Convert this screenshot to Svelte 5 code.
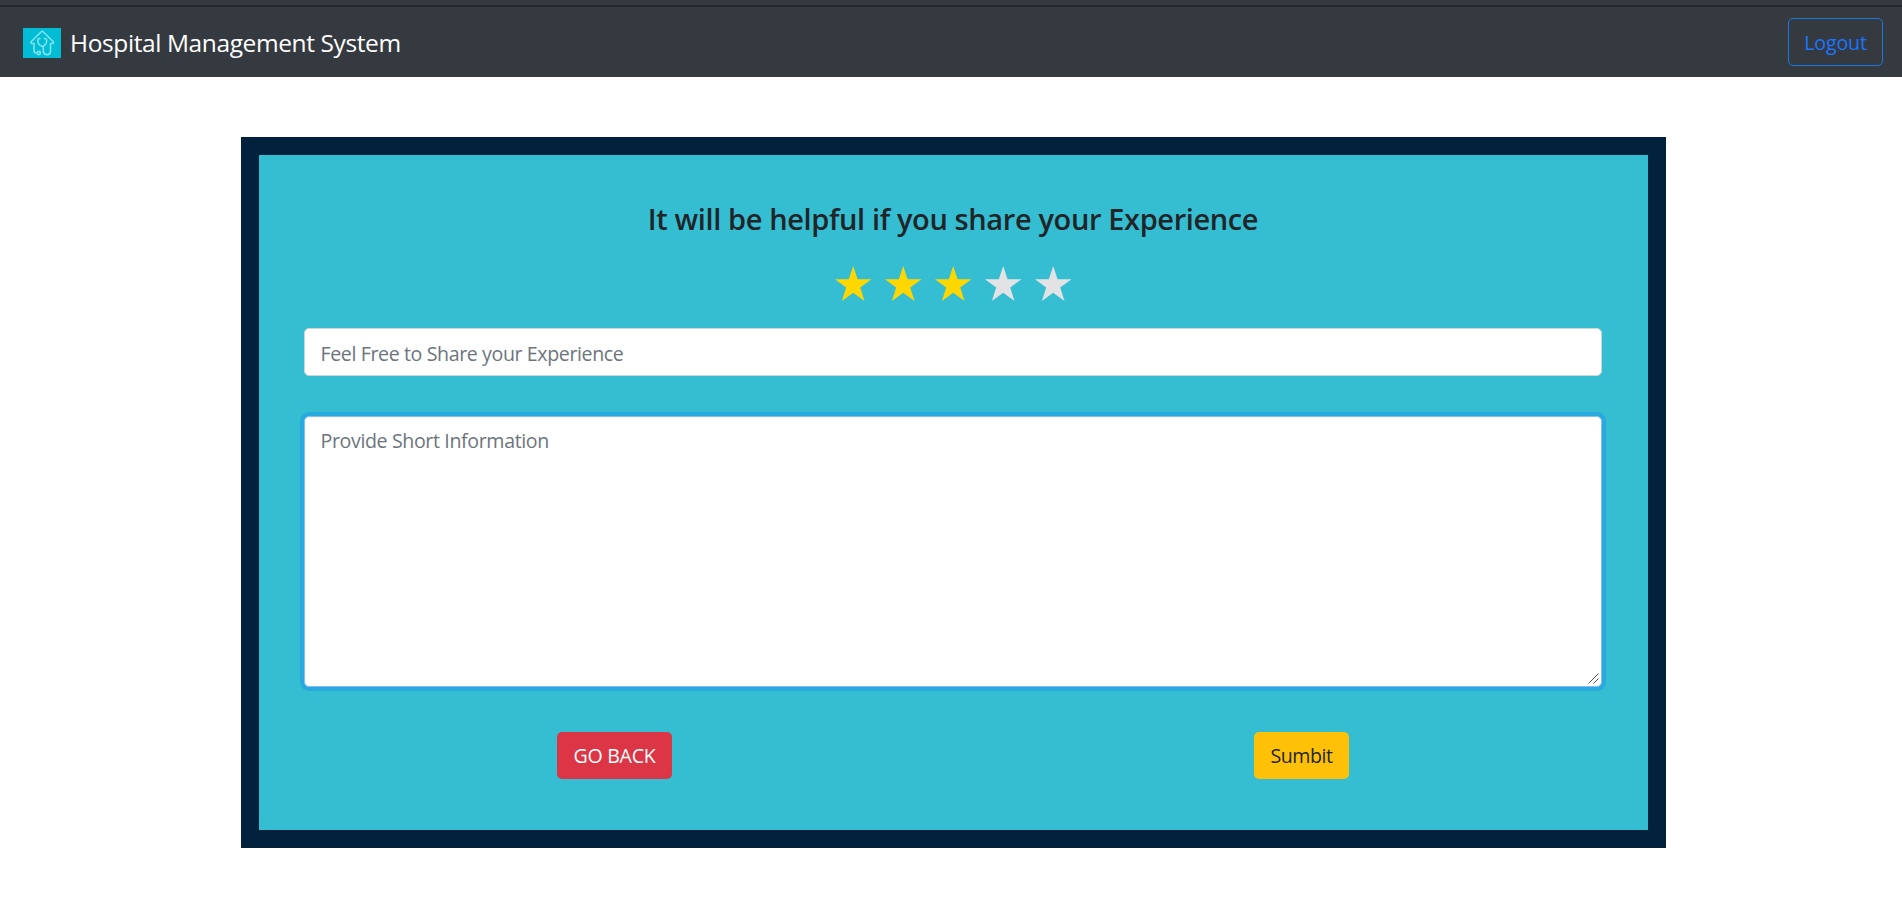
<script>
  let rating = $state(3);
  let title = $state('');
  let details = $state('');
</script>

<nav class="navbar">
  <a class="brand" href="#home">
    <svg class="logo" viewBox="0 0 38 30" aria-hidden="true">
      <rect width="38" height="30" fill="#00bcd4" />
      <g fill="none" stroke="#80e4ee" stroke-width="1.6" stroke-linecap="round" stroke-linejoin="round">
        <path d="M11 15.5H8.5Q7.3 14.7 8.4 13.5L18 4Q19.2 2.9 20.4 4L30 13.5Q31.1 14.7 29.8 15.5H27.5V23.5Q27.3 26.7 24 26.7Q20.8 26.5 20.3 23.5V18.5" />
        <path d="M11 15.5V22.5Q11 25 13.2 25H14" />
        <circle cx="15.8" cy="25" r="1.6" />
        <path d="M17 10.5Q14.7 10.3 14.8 13Q15.2 17.3 19.2 18.5Q23.3 17.3 23.7 13Q23.8 10.3 21.5 10.5" />
      </g>
    </svg>
    <span class="name">Hospital Management System</span>
  </a>
  <button class="btn outline" type="button">Logout</button>
</nav>

<main class="card">
  <h3>It will be helpful if you share your Experience</h3>
  <div class="stars">
    {#each [1, 2, 3, 4, 5] as n}
      <button type="button" class="star" class:on={n <= rating} aria-label="{n} stars" onclick={() => (rating = n)}>
        <svg viewBox="0.3 0 37 35"><path d="M18.5 0L22.85 13.3H36.8L25.5 21.5L29.8 35L18.5 26.8L7.2 35L11.5 21.5L.2 13.3H14.15Z" /></svg>
      </button>
    {/each}
  </div>
  <input class="field" type="text" placeholder="Feel Free to Share your Experience" bind:value={title} />
  <div class="area-wrap">
    <textarea class="field area" placeholder="Provide Short Information" bind:value={details}></textarea>
    <svg class="grip" viewBox="0 0 11 11" aria-hidden="true"><path d="M.5 10.5L10.5 .5M5.5 10.5L10.5 5.5" /></svg>
  </div>
  <div class="actions">
    <div><button class="btn danger" type="button">GO BACK</button></div>
    <div><button class="btn warning" type="button">Sumbit</button></div>
  </div>
</main>

<style>
  :global(body) {
    margin: 0;
    background: #fff;
    color: #212529;
    font-family: 'Open Sans', 'Noto Sans', sans-serif;
    font-size: 19.6px;
  }
  * {
    box-sizing: border-box;
  }
  .navbar {
    display: flex;
    align-items: center;
    justify-content: space-between;
    height: 77px;
    padding: 7px 19px 0 23px;
    background: linear-gradient(#343a40 5px, #24282d 5px, #24282d 7px, #343a40 7px);
  }
  .brand {
    display: flex;
    align-items: center;
    gap: 9px;
    margin-top: 2px;
    color: #fff;
    text-decoration: none;
  }
  .logo {
    display: block;
    width: 38px;
    height: 30px;
  }
  .name {
    font-size: 24.5px;
    letter-spacing: -0.396px;
    line-height: 30px;
    white-space: nowrap;
  }
  .btn {
    display: inline-block;
    height: 47px;
    padding: 0;
    border: 1px solid transparent;
    border-radius: 5px;
    font: inherit;
    line-height: 30px;
    text-align: center;
  }
  .outline {
    width: 95px;
    height: 48px;
    padding-top: 2px;
    border-color: #1a78dc;
    background: transparent;
    color: #1a75ff;
    letter-spacing: -0.17px;
  }
  .card {
    display: flex;
    flex-direction: column;
    width: 1425px;
    height: 711px;
    margin: 60px 0 0 241px;
    padding: 44px 46px 0 45px;
    border: 18px solid #02213d;
    background: #35bed1;
  }
  h3 {
    margin: 0;
    font-size: 29px;
    font-weight: 550;
    letter-spacing: -0.38px;
    line-height: 40px;
    text-align: center;
    white-space: nowrap;
  }
  .stars {
    display: flex;
    justify-content: center;
    gap: 13px;
    height: 35px;
    margin: 27px 0 27px 1px;
  }
  .star {
    width: 37px;
    height: 35px;
    padding: 0;
    border: 0;
    background: none;
    color: #e3e3e6;
  }
  .star.on {
    color: #ffd700;
  }
  .star svg {
    display: block;
    width: 37px;
    height: 35px;
    fill: currentColor;
  }
  .field {
    display: block;
    width: 1298px;
    height: 48px;
    margin: 0;
    padding: 8px 15.5px 6px;
    border: 1px solid #ced4da;
    border-radius: 5px;
    outline: 0;
    background: #fff;
    color: #495057;
    font: inherit;
    letter-spacing: -0.39px;
    line-height: 30px;
  }
  .field::placeholder {
    color: #6c757d;
    opacity: 1;
  }
  .area-wrap {
    position: relative;
    margin-top: 40px;
  }
  .area {
    height: 271px;
    padding-top: 9px;
    border-color: #80bdff;
    box-shadow: 0 0 0 4px #2aa9dd;
    letter-spacing: -0.37px;
    resize: none;
  }
  .grip {
    position: absolute;
    right: 3px;
    bottom: 3px;
    width: 11px;
    height: 11px;
    fill: none;
    stroke: #555;
    stroke-width: 1;
    pointer-events: none;
  }
  .actions {
    display: grid;
    grid-template-columns: 687px 687px;
    margin: 45px 0 0 -33px;
    text-align: center;
  }
  .danger {
    width: 115px;
    background: #dc3545;
    color: #fff;
    letter-spacing: -0.3px;
  }
  .warning {
    width: 95px;
    background: #ffc107;
    color: #212529;
    letter-spacing: -0.44px;
  }
</style>
